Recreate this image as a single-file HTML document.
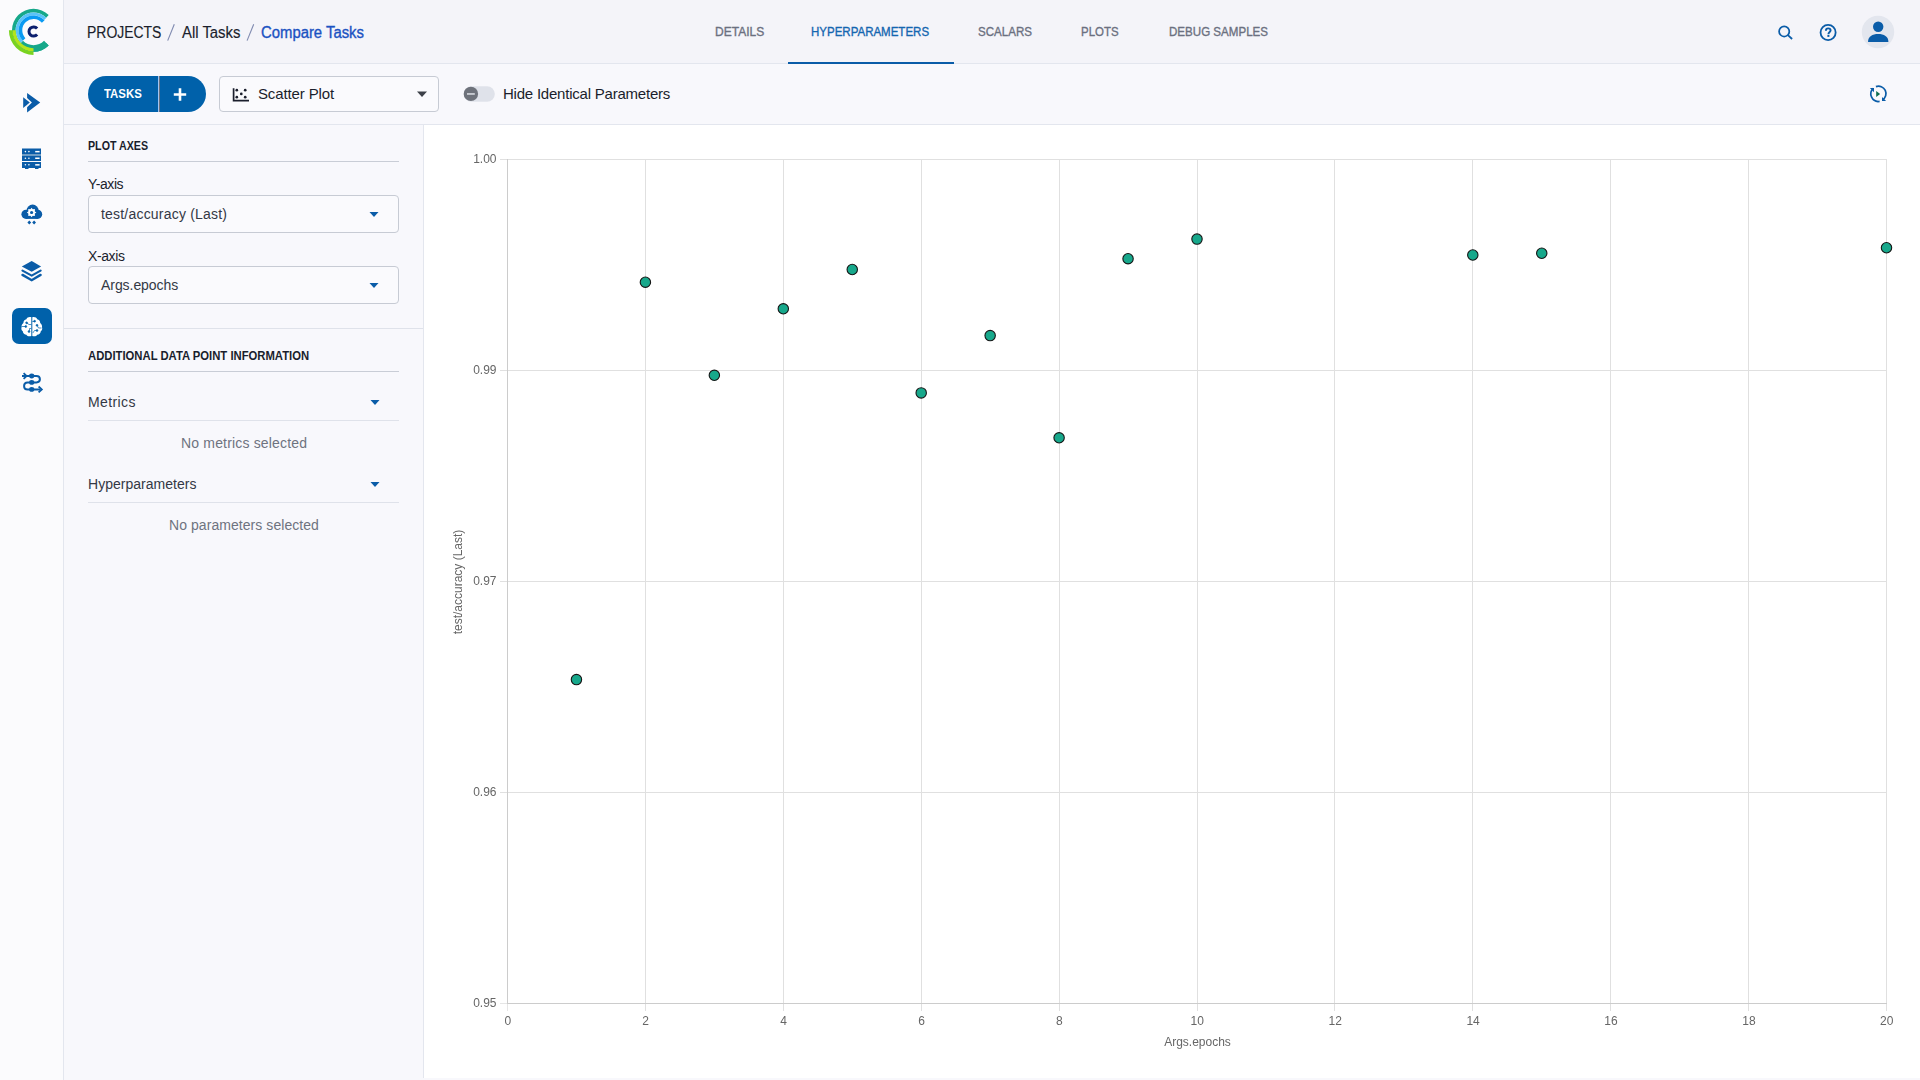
<!DOCTYPE html>
<html><head><meta charset="utf-8">
<style>
*{box-sizing:border-box;margin:0;padding:0}
html,body{width:1920px;height:1080px;overflow:hidden;background:#f8f8fc;font-family:"Liberation Sans",sans-serif;color:#1a1e2c}
.abs{position:absolute}
#side{left:0;top:0;width:64px;height:1080px;background:#fbfbfd;border-right:1px solid #e3e6ee}
#hdr{left:64px;top:0;width:1856px;height:64px;background:#f4f4f9;border-bottom:1px solid #e3e6ee}
#tb{left:64px;top:64px;width:1856px;height:61px;background:#f8f8fc;border-bottom:1px solid #e3e6ee}
#lp{left:64px;top:125px;width:360px;height:953px;background:#f8f8fc;border-right:1px solid #e3e6ee}
#ch{left:424px;top:125px;width:1496px;height:953px;background:#fff}
.t{position:absolute;white-space:nowrap;line-height:1}
.tab{position:absolute;top:24.5px;transform-origin:0 0;font-size:13px;font-weight:400;color:#6b7080;-webkit-text-stroke:0.35px #6b7080;white-space:nowrap;line-height:1}
.dd{position:absolute;border:1px solid #c7cbd4;border-radius:4px;background:#fafafd}
.sep{position:absolute;height:1px;background:#c9cdd6}
.sep2{position:absolute;height:1px;background:#dfe2ea}
</style></head><body>
<div id="side" class="abs"></div>
<div id="hdr" class="abs"></div>
<div id="tb" class="abs"></div>
<div id="lp" class="abs"></div>
<div id="ch" class="abs"></div>

<!-- breadcrumb -->
<div class="t" style="left:87.1px;top:24.5px;font-size:16px;transform:scaleX(0.872);transform-origin:0 0;color:#1a1e2c;-webkit-text-stroke:0.15px #1a1e2c">PROJECTS</div>
<div class="t" style="left:181.5px;top:24.5px;font-size:16px;transform:scaleX(0.93);transform-origin:0 0;color:#1a1e2c;-webkit-text-stroke:0.15px #1a1e2c">All Tasks</div>
<div class="t" style="left:261.2px;top:24.5px;font-size:16px;transform:scaleX(0.929);transform-origin:0 0;color:#1b52c2;-webkit-text-stroke:0.35px #1b52c2">Compare Tasks</div>
<svg class="abs" style="left:0;top:0" width="400" height="64">
<line x1="174.3" y1="24.3" x2="167.7" y2="40.6" stroke="#7f8ab0" stroke-width="1.1"/>
<line x1="253.7" y1="24.3" x2="247.1" y2="40.6" stroke="#7f8ab0" stroke-width="1.1"/>
</svg>

<!-- tabs -->
<div class="tab" style="left:714.6px;transform:scaleX(0.924)">DETAILS</div>
<div class="tab" style="left:811.4px;transform:scaleX(0.885);color:#1466b0;-webkit-text-stroke:0.35px #1466b0">HYPERPARAMETERS</div>
<div class="tab" style="left:977.7px;transform:scaleX(0.89)">SCALARS</div>
<div class="tab" style="left:1081.1px;transform:scaleX(0.881)">PLOTS</div>
<div class="tab" style="left:1168.9px;transform:scaleX(0.89)">DEBUG SAMPLES</div>
<div class="abs" style="left:788px;top:62px;width:166px;height:2px;background:#0a5ca8"></div>

<!-- toolbar -->
<div class="abs" style="left:88px;top:76px;width:118px;height:36px;border-radius:18px;background:#0061aa"></div>
<div class="abs" style="left:158px;top:76px;width:1px;height:36px;background:#a3c5f2"></div><div class="abs" style="left:159px;top:76px;width:1px;height:36px;background:#6b7280"></div>
<div class="t" style="left:104.1px;top:88px;font-size:12px;font-weight:700;transform:scaleX(0.95);transform-origin:0 0;color:#fff">TASKS</div>
<svg class="abs" style="left:172px;top:86px" width="16" height="16"><path d="M8 2.3V14.7M1.8 8.5H14.2" stroke="#fff" stroke-width="2.6"/></svg>
<div class="dd" style="left:219px;top:76px;width:220px;height:36px"></div>
<div class="t" style="left:258px;top:86px;font-size:15px;letter-spacing:-0.13px;color:#1a1e2c">Scatter Plot</div>
<svg class="abs" style="left:230px;top:86px" width="22" height="18">
<path d="M3.6 2.3V14.6H19" stroke="#1a1e2c" stroke-width="1.7" fill="none"/>
<g fill="#1a1e2c"><circle cx="6.8" cy="4.2" r="1.35"/><circle cx="15.2" cy="4.2" r="1.35"/><circle cx="11.3" cy="7.9" r="1.35"/><circle cx="6.8" cy="11.2" r="1.35"/><circle cx="15.2" cy="11.2" r="1.35"/></g>
</svg>
<svg class="abs" style="left:416px;top:90px" width="12" height="8"><path d="M1 1.5H11L6 7Z" fill="#3c4048"/></svg>

<svg class="abs" style="left:460px;top:84px" width="40" height="20">
<rect x="3.8" y="2.2" width="31" height="15.6" rx="7.8" fill="#dfe2ea"/>
<circle cx="10.9" cy="9.9" r="7.2" fill="#6e727b"/>
<rect x="7" y="9" width="7.8" height="1.9" fill="#c6c9d0"/>
</svg>
<div class="t" style="left:503px;top:86px;font-size:15px;letter-spacing:-0.22px;color:#1a1e2c">Hide Identical Parameters</div>

<!-- refresh icon -->
<svg class="abs" style="left:1866px;top:82px" width="24" height="24">
<path d="M9.9 4.6A7.5 7.5 0 0 1 16.3 18.1" stroke="#0a5ca8" stroke-width="1.7" fill="none"/>
<path d="M13.6 19.4A7.5 7.5 0 0 1 7.4 6.4" stroke="#0a5ca8" stroke-width="1.7" fill="none"/>
<path d="M3.9 6.1H8V10.2Z" fill="#0a5ca8"/>
<path d="M16 14.9V19H20.1Z" fill="#0a5ca8"/>
<path d="M10.2 9.1L14.1 12L10.2 14.9Z" fill="#0d6e50"/>
</svg>

<!-- header right icons -->
<svg class="abs" style="left:1770px;top:18px" width="30" height="28">
<circle cx="14.2" cy="13.4" r="5.1" stroke="#0a5ca8" stroke-width="1.75" fill="none"/>
<path d="M17.9 17.2L22.1 21" stroke="#0a5ca8" stroke-width="1.8"/>
</svg>
<svg class="abs" style="left:1812px;top:16px" width="32" height="32">
<circle cx="16.1" cy="16.5" r="7.55" stroke="#0a5ca8" stroke-width="1.8" fill="none"/>
<path d="M13.9 14.7C13.9 13.2 14.9 12.4 16.2 12.4C17.6 12.4 18.6 13.2 18.6 14.4C18.6 15.9 16.4 16.1 16.4 18.2" stroke="#0a5ca8" stroke-width="1.9" fill="none"/>
<rect x="15.4" y="19" width="2" height="1.9" fill="#0a5ca8"/>
</svg>
<svg class="abs" style="left:1860px;top:14px" width="36" height="36">
<circle cx="18" cy="18" r="16.2" fill="#e3e6ee"/>
<circle cx="18.2" cy="12.7" r="5.2" fill="#0a5ca8"/>
<path d="M8 27.9C8 22.5 12.5 20.1 18.2 20.1C23.9 20.1 28.4 22.5 28.4 27.9Z" fill="#0a5ca8"/>
</svg>

<!-- left panel -->
<div class="t" style="left:88px;top:140px;font-size:12.5px;font-weight:700;transform:scaleX(0.854);transform-origin:0 0;color:#1a1e2c">PLOT AXES</div>
<div class="sep" style="left:88px;top:161px;width:311px"></div>
<div class="t" style="left:88px;top:177px;font-size:14px;letter-spacing:-0.4px;color:#1a1e2c">Y-axis</div>
<div class="dd" style="left:88px;top:195px;width:311px;height:38px"></div>
<div class="t" style="left:101px;top:207px;font-size:14px;letter-spacing:0.2px;color:#333845">test/accuracy (Last)</div>
<svg class="abs" style="left:368px;top:210px" width="12" height="9"><path d="M1.5 2H10.5L6 7Z" fill="#0a5ca8"/></svg>
<div class="t" style="left:88px;top:249px;font-size:14px;letter-spacing:-0.4px;color:#1a1e2c">X-axis</div>
<div class="dd" style="left:88px;top:266px;width:311px;height:38px"></div>
<div class="t" style="left:101px;top:278px;font-size:14px;letter-spacing:-0.06px;color:#333845">Args.epochs</div>
<svg class="abs" style="left:368px;top:281px" width="12" height="9"><path d="M1.5 2H10.5L6 7Z" fill="#0a5ca8"/></svg>
<div class="sep2" style="left:64px;top:328px;width:359px"></div>
<div class="t" style="left:88px;top:349.5px;font-size:12.5px;font-weight:700;transform:scaleX(0.902);transform-origin:0 0;color:#1a1e2c">ADDITIONAL DATA POINT INFORMATION</div>
<div class="sep" style="left:88px;top:371px;width:311px"></div>
<div class="t" style="left:88px;top:395px;font-size:14px;letter-spacing:0.38px;color:#333845">Metrics</div>
<svg class="abs" style="left:369px;top:398px" width="12" height="9"><path d="M1.5 2H10.5L6 7Z" fill="#0a5ca8"/></svg>
<div class="sep2" style="left:88px;top:420px;width:311px"></div>
<div class="t" style="left:181px;top:436px;font-size:14px;letter-spacing:0.17px;color:#6e7380">No metrics selected</div>
<div class="t" style="left:88px;top:477px;font-size:14px;letter-spacing:0.02px;color:#333845">Hyperparameters</div>
<svg class="abs" style="left:369px;top:480px" width="12" height="9"><path d="M1.5 2H10.5L6 7Z" fill="#0a5ca8"/></svg>
<div class="sep2" style="left:88px;top:502px;width:311px"></div>
<div class="t" style="left:169px;top:518px;font-size:14px;letter-spacing:0.06px;color:#6e7380">No parameters selected</div>

<!-- sidebar icons -->
<svg class="abs" style="left:0;top:0" width="64" height="400">
<!-- logo -->
<g transform="translate(0,0)">
</g>
<path d="M27.1 93L40.2 102.6L27.1 112.4V107.3L31.9 102.6L27.1 97.9Z" fill="#0a5ca8"/>
<path d="M23.2 97.2L29.8 102.6L23.2 108Z" fill="#0a5ca8"/>
<!-- server -->
<rect x="22" y="148.5" width="19" height="5.5" fill="#0a5ca8"/>
<rect x="22" y="154" width="19" height="2" fill="#6e9cc4"/>
<rect x="22" y="156" width="19" height="5" fill="#0a5ca8"/>
<rect x="22" y="162" width="19" height="6" fill="#0a5ca8"/>
<rect x="25" y="167.5" width="3.5" height="1.5" fill="#0a5ca8"/>
<rect x="35" y="167.5" width="3.5" height="1.5" fill="#0a5ca8"/>
<g fill="#fff">
<circle cx="25.4" cy="151.6" r="0.8"/><circle cx="28.9" cy="151.6" r="0.8"/><rect x="35.2" y="150.9" width="4.4" height="1.5"/>
<circle cx="25.4" cy="158.2" r="0.8"/><circle cx="28.9" cy="158.2" r="0.8"/><rect x="35.2" y="157.5" width="4.4" height="1.5"/>
<circle cx="25.4" cy="164.8" r="0.8"/><circle cx="28.9" cy="164.8" r="0.8"/><rect x="35.2" y="164.1" width="4.4" height="1.5"/>
</g>
<!-- cloud -->
<g fill="#0a5ca8"><circle cx="26" cy="214.3" r="4.6"/><circle cx="32.6" cy="210.7" r="6.1"/><circle cx="37.6" cy="214.3" r="4.6"/><rect x="26" y="212" width="11.6" height="6.9"/></g>
<g transform="translate(31.6,212.5)" fill="#fff">
<circle r="3.4"/>
<path d="M0 -4.8L1.3 -2.9L-1.3 -2.9Z M0 4.8L1.3 2.9L-1.3 2.9Z M-4.8 0L-2.9 1.3L-2.9 -1.3Z M4.8 0L2.9 1.3L2.9 -1.3Z M-3.4 -3.4L-1.1 -3.0L-3.0 -1.1Z M3.4 3.4L1.1 3.0L3.0 1.1Z M3.4 -3.4L1.1 -3.0L3.0 -1.1Z M-3.4 3.4L-1.1 3.0L-3.0 1.1Z"/>
<circle r="1.6" fill="#0a5ca8"/>
</g>
<path d="M29.3 220.6L31.2 222.5L29.3 224.4L27.4 222.5Z M34.1 220.6L36 222.5L34.1 224.4L32.2 222.5Z" fill="#0a5ca8"/>
<!-- layers -->
<path d="M21.8 266.4L31.7 261L41.1 266.4L31.7 271.8Z" fill="#0a5ca8"/>
<path d="M22.5 270.6L31.7 275.6L40.6 270.6" stroke="#0a5ca8" stroke-width="2.2" fill="none" stroke-linecap="round"/>
<path d="M22.5 274.9L31.7 280.2L40.6 274.9" stroke="#0a5ca8" stroke-width="2.4" fill="none" stroke-linecap="round"/>
<!-- active brain -->
<rect x="12" y="308" width="40" height="36" rx="7" fill="#0061aa"/>
<path d="M31.3 317.2C29 316.6 27 317.5 26.4 319.2C24.6 319.6 23.3 321.2 23.4 323C21.9 324 21.3 325.8 21.6 327.3C21 328.6 21.5 330.5 22.8 331.3C23 333.3 24.5 334.7 26.4 334.8C27.2 336.2 29.2 336.8 31.3 336Z" fill="#fff"/>
<path d="M32.3 317.2C34.6 316.6 36.6 317.5 37.2 319.2C39 319.6 40.3 321.2 40.2 323C41.7 324 42.3 325.8 42 327.3C42.6 328.6 42.1 330.5 40.8 331.3C40.6 333.3 39.1 334.7 37.2 334.8C36.4 336.2 34.4 336.8 32.3 336Z" fill="#fff"/>
<g stroke="#0061aa" stroke-width="0.7" fill="#0061aa">
<path d="M21.5 326.5H25.5" fill="none"/><circle cx="25.8" cy="326.5" r="0.9"/>
<path d="M26.8 323L29 324.5L31.3 324.5" fill="none"/><circle cx="26.6" cy="322.8" r="0.9"/>
<path d="M31.3 328.5H29.5V330.8" fill="none"/><circle cx="29" cy="331.5" r="0.9"/>
<path d="M32.3 321.5H34.5" fill="none"/><circle cx="34.6" cy="321.2" r="0.9"/>
<circle cx="37" cy="325.3" r="0.9"/><path d="M37 325.3L38.5 328H41.5" fill="none"/>
<path d="M32.8 333L34.5 330.5H36.8" fill="none"/><circle cx="37" cy="330.5" r="0.9"/>
</g>
<!-- pipeline -->
<path d="M22 376H36.4C38.6 376 39.9 377.5 39.9 379.3C39.9 381.1 38.6 382.4 36.4 382.4H27.6C25.4 382.4 24.1 384 24.1 385.9C24.1 387.8 25.4 389.4 27.6 389.4H40.5" stroke="#0a5ca8" stroke-width="2" fill="none"/>
<path d="M23.6 373.2L26.6 376L23.6 378.8" stroke="#0a5ca8" stroke-width="1.8" fill="none"/>
<path d="M38.6 386.5L41.8 389.4L38.6 392.3" stroke="#0a5ca8" stroke-width="1.8" fill="none"/>
<ellipse cx="31.7" cy="376" rx="2.6" ry="2.4" fill="#0a5ca8"/><ellipse cx="31.7" cy="382.4" rx="2.6" ry="2.4" fill="#0a5ca8"/><ellipse cx="31.7" cy="389.4" rx="2.6" ry="2.4" fill="#0a5ca8"/>
</svg>

<!-- logo -->
<svg class="abs" style="left:0;top:0" width="64" height="64">
<path d="M48.70 45.50A21.5 21.5 0 1 1 48.70 15.10L46.16 17.64A17.9 17.9 0 1 0 46.16 42.96Z" fill="#16a88a"/>
<path d="M48.70 45.50A21.5 21.5 0 0 1 18.30 45.50L22.96 40.84A14.9 14.9 0 0 0 44.04 40.84Z" fill="#16a88a"/>
<path d="M20.62 42.73A17.9 17.9 0 0 1 46.38 17.87L44.22 19.95A14.9 14.9 0 0 0 22.78 40.65Z" fill="#5ac3f7"/>
<path d="M22.78 40.65A14.9 14.9 0 1 1 44.57 20.33L41.90 22.74A11.3 11.3 0 1 0 25.37 38.15Z" fill="#0a9af2"/>
<path d="M33.50 51.50A21.2 21.2 0 0 1 12.30 30.30L15.60 30.30A17.9 17.9 0 0 0 33.50 48.20Z" fill="#b5e41c"/>
<path d="M33.50 54.90A24.6 24.6 0 0 1 8.90 30.30L12.30 30.30A21.2 21.2 0 0 0 33.50 51.50Z" fill="#7ad31f"/>
<path d="M37.12 28.54A4.6 4.6 0 1 0 37.12 34.46" stroke="#0b1f6e" stroke-width="3" fill="none"/>
</svg>

<!-- chart -->
<svg class="abs" style="left:0;top:0;font-family:'Liberation Sans',sans-serif;font-size:12px;will-change:transform" width="1920" height="1080" fill="#666">
<line x1="500" y1="159.5" x2="1887" y2="159.5" stroke="#e0e0e0"/>
<line x1="500" y1="370.5" x2="1887" y2="370.5" stroke="#e0e0e0"/>
<line x1="500" y1="581.5" x2="1887" y2="581.5" stroke="#e0e0e0"/>
<line x1="500" y1="792.5" x2="1887" y2="792.5" stroke="#e0e0e0"/>
<line x1="645.5" y1="159" x2="645.5" y2="1011" stroke="#e0e0e0"/>
<line x1="783.5" y1="159" x2="783.5" y2="1011" stroke="#e0e0e0"/>
<line x1="921.5" y1="159" x2="921.5" y2="1011" stroke="#e0e0e0"/>
<line x1="1059.5" y1="159" x2="1059.5" y2="1011" stroke="#e0e0e0"/>
<line x1="1197.5" y1="159" x2="1197.5" y2="1011" stroke="#e0e0e0"/>
<line x1="1334.5" y1="159" x2="1334.5" y2="1011" stroke="#e0e0e0"/>
<line x1="1472.5" y1="159" x2="1472.5" y2="1011" stroke="#e0e0e0"/>
<line x1="1610.5" y1="159" x2="1610.5" y2="1011" stroke="#e0e0e0"/>
<line x1="1748.5" y1="159" x2="1748.5" y2="1011" stroke="#e0e0e0"/>
<line x1="1886.5" y1="159" x2="1886.5" y2="1011" stroke="#e0e0e0"/>
<line x1="500" y1="1003.5" x2="507" y2="1003.5" stroke="#e6e6e6"/>
<line x1="507.5" y1="1003" x2="507.5" y2="1011" stroke="#e6e6e6"/>
<line x1="507" y1="1003.5" x2="1887" y2="1003.5" stroke="#cccccc"/>
<line x1="507.5" y1="159" x2="507.5" y2="1004" stroke="#cccccc"/>
<text x="496.5" y="163.3" text-anchor="end">1.00</text>
<text x="496.5" y="374.3" text-anchor="end">0.99</text>
<text x="496.5" y="585.3" text-anchor="end">0.97</text>
<text x="496.5" y="796.3" text-anchor="end">0.96</text>
<text x="496.5" y="1007.3" text-anchor="end">0.95</text>
<text x="507.8" y="1025" text-anchor="middle">0</text>
<text x="645.6999999999999" y="1025" text-anchor="middle">2</text>
<text x="783.5999999999999" y="1025" text-anchor="middle">4</text>
<text x="921.5" y="1025" text-anchor="middle">6</text>
<text x="1059.3999999999999" y="1025" text-anchor="middle">8</text>
<text x="1197.3" y="1025" text-anchor="middle">10</text>
<text x="1335.2" y="1025" text-anchor="middle">12</text>
<text x="1473.1" y="1025" text-anchor="middle">14</text>
<text x="1611.0" y="1025" text-anchor="middle">16</text>
<text x="1748.8999999999999" y="1025" text-anchor="middle">18</text>
<text x="1886.8" y="1025" text-anchor="middle">20</text>
<text x="1197.5" y="1046" text-anchor="middle">Args.epochs</text>
<text transform="translate(462.3,582) rotate(-90)" text-anchor="middle">test/accuracy (Last)</text>
<circle cx="576.45" cy="679.6" r="5.2" fill="#17a88b" stroke="#151515" stroke-width="1.1"/>
<circle cx="645.40" cy="282.2" r="5.2" fill="#17a88b" stroke="#151515" stroke-width="1.1"/>
<circle cx="714.35" cy="375.3" r="5.2" fill="#17a88b" stroke="#151515" stroke-width="1.1"/>
<circle cx="783.30" cy="308.8" r="5.2" fill="#17a88b" stroke="#151515" stroke-width="1.1"/>
<circle cx="852.25" cy="269.5" r="5.2" fill="#17a88b" stroke="#151515" stroke-width="1.1"/>
<circle cx="921.20" cy="392.9" r="5.2" fill="#17a88b" stroke="#151515" stroke-width="1.1"/>
<circle cx="990.15" cy="335.6" r="5.2" fill="#17a88b" stroke="#151515" stroke-width="1.1"/>
<circle cx="1059.10" cy="437.8" r="5.2" fill="#17a88b" stroke="#151515" stroke-width="1.1"/>
<circle cx="1128.05" cy="258.7" r="5.2" fill="#17a88b" stroke="#151515" stroke-width="1.1"/>
<circle cx="1197.00" cy="239.1" r="5.2" fill="#17a88b" stroke="#151515" stroke-width="1.1"/>
<circle cx="1472.80" cy="255" r="5.2" fill="#17a88b" stroke="#151515" stroke-width="1.1"/>
<circle cx="1541.75" cy="253.25" r="5.2" fill="#17a88b" stroke="#151515" stroke-width="1.1"/>
<circle cx="1886.50" cy="247.75" r="5.2" fill="#17a88b" stroke="#151515" stroke-width="1.1"/>
</svg>
</body></html>
